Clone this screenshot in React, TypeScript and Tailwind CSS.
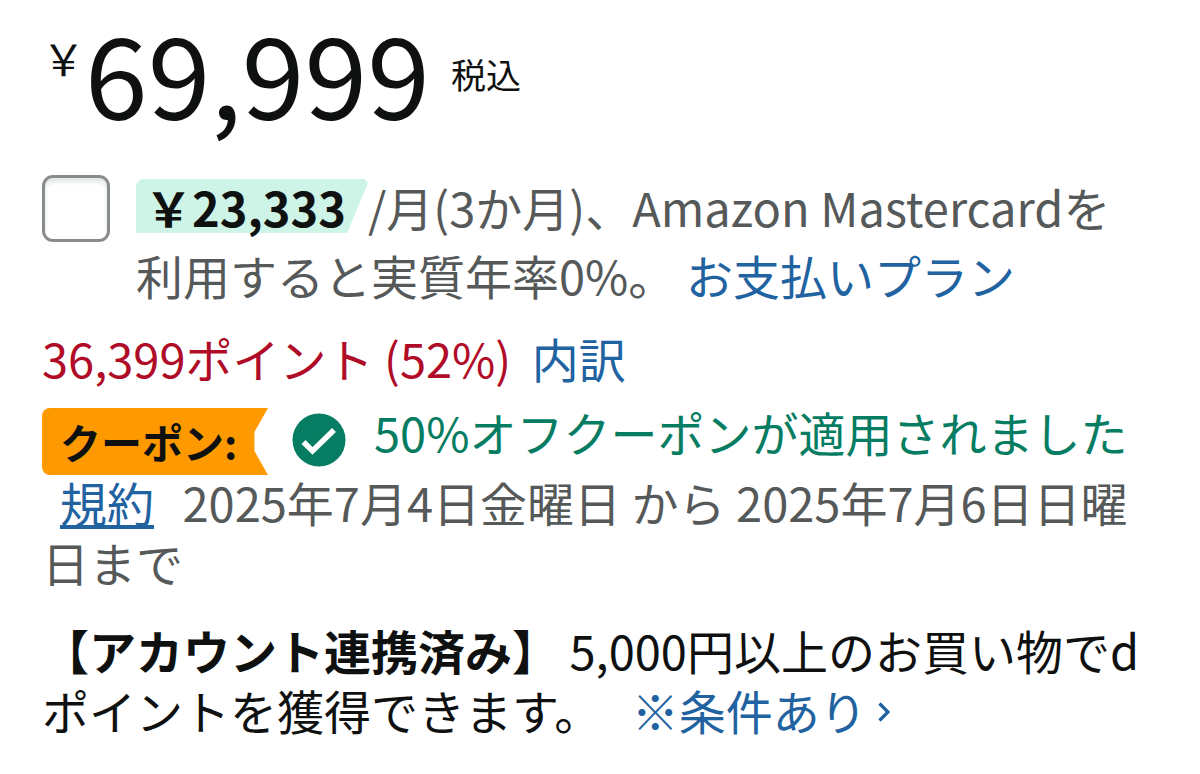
const FONT = "font-['Noto_Sans_CJK_JP',sans-serif]";

// full-width yen sign
const YEN = '\uffe5';

function AppliedIcon() {
  return (
    <svg viewBox="0 0 54 54" className="mt-[5px] ml-[24px] size-[54px] shrink-0" aria-hidden="true">
      <circle cx="27" cy="27" r="26.5" fill="#067d62" />
      <path d="M11.5 29 20.5 38 42 17" fill="none" stroke="#fff" strokeWidth="5.5" />
    </svg>
  );
}

function ChevronIcon() {
  return (
    <svg viewBox="0 0 12 20" className="mb-[8px] ml-[11px] inline-block h-[20px] w-[12px] align-baseline" aria-hidden="true">
      <path d="M1.5 1.5 10 10 1.5 18.5" fill="none" stroke="currentColor" strokeWidth="3.2" />
    </svg>
  );
}

function InstallmentOption() {
  return (
    <div className="mt-[41px] flex items-start gap-[27px]">
      <input
        id="installment"
        type="checkbox"
        className="mt-[2px] h-[67px] w-[68px] shrink-0 appearance-none rounded-[11px] border-[3px] border-[#888c8c] bg-white shadow-[inset_0_4px_4px_#e3e6e6] checked:bg-[#2162a1]"
      />
      <label htmlFor="installment" className="-ml-px text-[47px] leading-[68px] text-[#565959]">
        <span className="relative inline-block pr-[22px] pl-[9px] font-bold text-[#0f1111]">
          <span className="absolute inset-x-0 top-[6px] h-[54px] rounded-tl-lg bg-[#cdf4e6] [clip-path:polygon(0_0,98%_0,99%_2%,100%_8%,91%_100%,0_100%)]" />
          <span className="relative">{YEN}23,333</span>
        </span>
        /月(3か月)、Amazon Mastercardを
        <br />
        利用すると実質年率0%。{' '}
        <a href="#plan" className="text-[#2162a1]">お支払いプラン</a>
      </label>
    </div>
  );
}

function CouponRow() {
  return (
    <div className="mt-[16px] flex items-start">
      <span className="h-[67px] w-[226px] shrink-0 rounded-l-lg bg-[#ff9900] pl-[18px] text-[41px] leading-[67px] font-bold text-[#0f1111] [clip-path:polygon(0_0,100%_0,94%_36%,94%_64%,100%_100%,0_100%)]">
        クーポン:
      </span>
      <AppliedIcon />
      <span className="ml-[28px] text-[47px] leading-[48px] text-[#067d62]">50%オフクーポンが適用されました</span>
    </div>
  );
}

export default function App() {
  return (
    <main className={`min-h-screen bg-white px-[42px] pt-[10px] text-[#0f1111] ${FONT}`}>
      <div className="flex items-start">
        <span className="mt-[17px] text-[43px] leading-[60px]">{YEN}</span>
        <span className="text-[113px] leading-[122px]">69,999</span>
        <span className="mt-[36px] ml-[21px] text-[35px] leading-[56px]">税込</span>
      </div>

      <InstallmentOption />

      <p className="mt-[15px] text-[47px] leading-[68px] text-[#b00c28]">
        36,399ポイント (52%){' '}
        <a href="#points" className="ml-[10px] text-[#2162a1]">内訳</a>
      </p>

      <CouponRow />

      <p className="-mt-[3px] text-[47px] leading-[60px] text-[#565959]">
        <a href="#terms" className="mr-[18px] ml-[18px] text-[#2162a1] underline">規約</a>
        {' '}2025年7月4日金曜日 から 2025年7月6日日曜
        <br />
        日まで
      </p>

      <p className="mt-[28px] text-[47px] leading-[60px]">
        <strong>【アカウント連携済み】</strong> 5,000円以上のお買い物でd
        <br />
        ポイントを獲得できます。{' '}
        <a href="#conditions" className="ml-[20px] text-[#2162a1]">
          ※条件あり
          <ChevronIcon />
        </a>
      </p>
    </main>
  );
}
